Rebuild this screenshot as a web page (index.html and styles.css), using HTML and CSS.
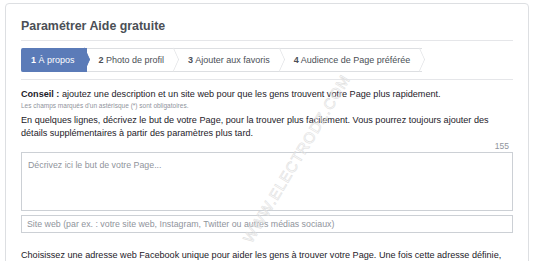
FILE: index.html
```html
<!DOCTYPE html>
<html lang="fr">
<head>
  <meta charset="UTF-8" />
  <meta name="viewport" content="width=device-width, initial-scale=1.0"/>
  <title>Paramétrer Aide gratuite</title>
  <link rel="stylesheet" href="styles.css">
</head>
<body>
  <div class="card">
    <div class="card-header">
      <h2>Paramétrer Aide gratuite</h2>
    </div>

    <div class="steps">
      <div class="step active"><strong>1</strong> À propos</div>
      <div class="step"><strong>2</strong> Photo de profil</div>
      <div class="step"><strong>3</strong> Ajouter aux favoris</div>
      <div class="step"><strong>4</strong> Audience de Page préférée</div>
    </div>

    <div class="content">
      <p class="tip"><strong>Conseil :</strong> ajoutez une description et un site web pour que les gens trouvent votre Page plus rapidement.</p>
      <p class="note">Les champs marqués d'un astérisque (*) sont obligatoires.</p>
      <p class="intro">En quelques lignes, décrivez le but de votre Page, pour la trouver plus facilement. Vous pourrez toujours ajouter des détails supplémentaires à partir des paramètres plus tard.</p>
      <div class="counter">155</div>
      <textarea class="about" placeholder="Décrivez ici le but de votre Page..."></textarea>
      <input type="text" class="website" placeholder="Site web (par ex. : votre site web, Instagram, Twitter ou autres médias sociaux)" />
      <p class="intro address">Choisissez une adresse web Facebook unique pour aider les gens à trouver votre Page. Une fois cette adresse définie,</p>
    </div>
  </div>

  <div class="watermark">WWW.ELECTRODZ.COM</div>
</body>
</html>
```

FILE: styles.css
```css
body {
  margin: 0;
  padding: 3px 4px 0 5px;
  background: #fff;
  font-family: "Liberation Sans", Arial, sans-serif;
  color: #1d2129;
  overflow: hidden;
}

.card {
  border: 1px solid #dddfe2;
  border-radius: 4px;
  padding: 0 15px 20px;
  background: #fff;
}

.card-header {
  padding: 14px 0 6px;
  border-bottom: 1px solid #e5e6e9;
}

.card-header h2 {
  margin: 0;
  font-size: 12.4px;
  line-height: 16px;
  color: #4b4f56;
}

.steps {
  display: flex;
  padding: 7px 0;
  border-bottom: 1px solid #e5e6e9;
}

.step {
  position: relative;
  height: 22px;
  line-height: 22px;
  padding: 0 12px 0 12px;
  font-size: 9px;
  color: #4b4f56;
  border-top: 1px solid #dddfe2;
  border-bottom: 1px solid #dddfe2;
  background: #fff;
}

.step::after {
  content: "";
  position: absolute;
  top: 2px;
  right: -6px;
  width: 16px;
  height: 16px;
  border-top: 1px solid #dddfe2;
  border-right: 1px solid #dddfe2;
  background: inherit;
  transform: scaleX(0.45) rotate(45deg);
  z-index: 1;
}

.step.active {
  background: #5b7bb8;
  border-color: #5b7bb8;
  color: #fff;
  padding-left: 10px;
  border-radius: 2px 0 0 2px;
}

.step.active::after {
  border-color: #5b7bb8;
}

.content {
  padding-top: 8px;
}

.content p {
  margin: 0;
}

.tip {
  font-size: 9.1px;
  line-height: 13px;
}

.note {
  font-size: 6.5px;
  line-height: 9px;
  color: #90949c;
}

.intro {
  margin-top: 4px !important;
  font-size: 9.1px;
  line-height: 13px;
}

.counter {
  text-align: right;
  font-size: 8.5px;
  line-height: 12px;
  color: #90949c;
  padding: 0 4px 0 0;
}

.about,
.website {
  display: block;
  box-sizing: border-box;
  width: 100%;
  border: 1px solid #ccd0d5;
  font-family: "Liberation Sans", Arial, sans-serif;
  font-size: 8.8px;
  color: #1d2129;
  resize: none;
  outline: none;
}

.about {
  height: 59px;
  padding: 7px 6px;
}

.website {
  margin-top: 4px;
  height: 18px;
  padding: 0 5px;
}

.about::placeholder,
.website::placeholder {
  color: #90949c;
}

.address {
  margin-top: 16px !important;
}

.watermark {
  position: absolute;
  left: 200px;
  top: 150px;
  font-size: 15px;
  letter-spacing: 1px;
  color: transparent;
  -webkit-text-stroke: 0.6px #e0e0e0;
  transform: rotate(-59deg);
  pointer-events: none;
}
```
